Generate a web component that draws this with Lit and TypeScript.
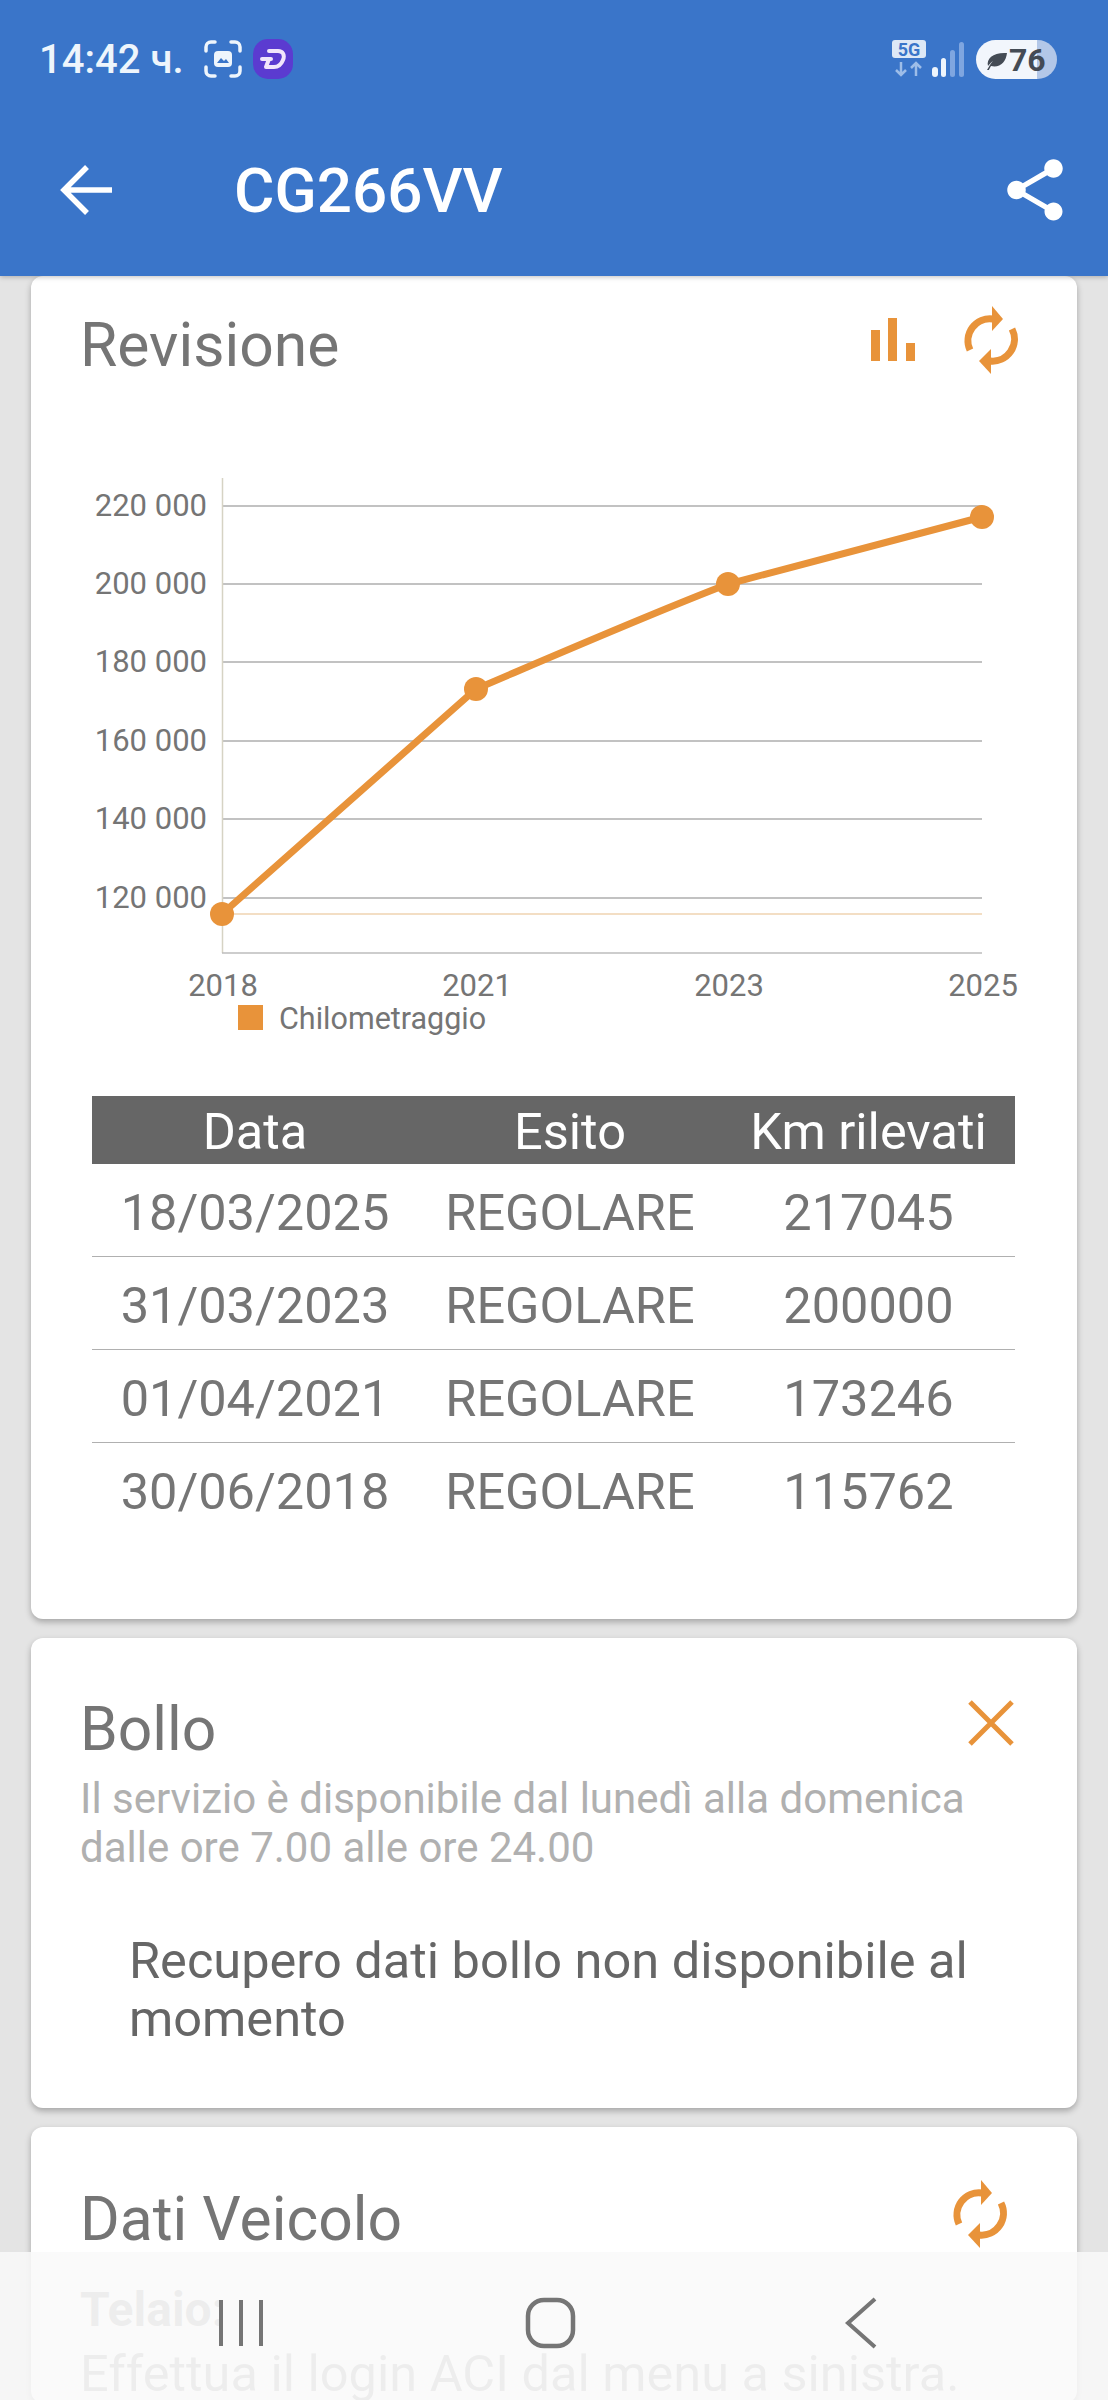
import { LitElement, html, svg, css } from 'lit';
import { customElement } from 'lit/decorators.js';

const ORANGE = '#e8933a';

const GRID = [
  { y: 506, label: '220 000' },
  { y: 584, label: '200 000' },
  { y: 662, label: '180 000' },
  { y: 741, label: '160 000' },
  { y: 819, label: '140 000' },
  { y: 898, label: '120 000' },
];

const POINTS = [
  { x: 222, y: 914, year: '2018' },
  { x: 476, y: 689, year: '2021' },
  { x: 728, y: 584, year: '2023' },
  { x: 982, y: 517, year: '2025' },
];

const ROWS = [
  ['18/03/2025', 'REGOLARE', '217045'],
  ['31/03/2023', 'REGOLARE', '200000'],
  ['01/04/2021', 'REGOLARE', '173246'],
  ['30/06/2018', 'REGOLARE', '115762'],
];

const refreshIcon = html`
  <svg class="icon" width="60" height="80" viewBox="0 0 60 80" fill="none">
    <path d="M9 50A22 22 0 0 1 32 19" stroke=${ORANGE} stroke-width="7" />
    <path d="M31 6V31L42 19Z" fill=${ORANGE} />
    <path d="M51 29A22 22 0 0 1 29 61" stroke=${ORANGE} stroke-width="7" />
    <path d="M30 49V74L18 61Z" fill=${ORANGE} />
  </svg>
`;

@customElement('app-root')
export class AppRoot extends LitElement {
  static styles = css`
    :host {
      background: #e4e4e4;
      color: #757575;
      display: block;
      font-family: Roboto, "Liberation Sans", sans-serif;
      height: 2400px;
      overflow: hidden;
      position: relative;
    }
    header {
      background: #3a75c9;
      box-shadow: 0 1px 5px rgba(0, 0, 0, 0.25);
      color: #fff;
      height: 276px;
      position: relative;
      z-index: 1;
    }
    .status {
      align-items: center;
      display: flex;
      height: 118px;
      padding: 0 51px 0 39px;
    }
    .time {
      color: #eef5fc;
      font-size: 40px;
      font-weight: 500;
      margin-right: 20px;
    }
    .status-right {
      align-items: center;
      display: flex;
      margin-left: auto;
    }
    .toolbar {
      align-items: center;
      display: flex;
      height: 144px;
      padding: 0 36px 0 60px;
    }
    .toolbar h1 {
      font-size: 62px;
      font-weight: 500;
      margin: 0 0 0 120px;
    }
    .toolbar .share { margin-left: auto; }
    main {
      display: flex;
      flex-direction: column;
      gap: 19px;
      padding: 0 31px;
    }
    .card {
      background: #fff;
      border-radius: 12px;
      box-shadow: 0 3px 6px rgba(0, 0, 0, 0.28);
      box-sizing: border-box;
    }
    .card-revisione { height: 1343px; padding-top: 35px; }
    .card-bollo { height: 470px; padding-top: 57px; }
    .card-dati { padding-top: 58px; }
    .card-head {
      align-items: center;
      display: flex;
      height: 70px;
      justify-content: space-between;
      padding: 0 56px 0 49px;
    }
    .card-head h2 {
      font-size: 60.6px;
      font-weight: 400;
      line-height: 70px;
      margin: 0;
    }
    .actions {
      align-items: center;
      display: flex;
      gap: 46px;
      margin-top: -12px;
    }
    .card-bollo .card-head { padding-right: 62px; }
    .card-dati .card-head { padding-right: 67px; }
    .icon { display: block; }
    .chart {
      display: block;
      margin-top: 79px;
    }
    table {
      border-collapse: collapse;
      font-size: 50.5px;
      margin: 56px 0 0 61px;
      table-layout: fixed;
      width: 923px;
    }
    th {
      background: #666;
      color: #fff;
      font-weight: 400;
      height: 66px;
      padding: 2px 0 0;
    }
    td {
      border-top: 1.5px solid #b0b0b0;
      height: 88px;
      padding: 4px 0 0;
      text-align: center;
    }
    tbody tr:first-child td { border-top: 0; }
    .col-date { width: 326px; }
    .col-esito { width: 304px; }
    .note {
      color: #b0b0b0;
      font-size: 42px;
      line-height: 49px;
      margin: 9px 0 0;
      padding: 0 49px;
    }
    .message {
      color: #666;
      font-size: 50.5px;
      line-height: 58px;
      margin: 60px 0 0;
      padding: 0 50px 0 98px;
    }
    .field-label {
      color: #aaa;
      font-size: 48px;
      font-weight: 700;
      margin: 26px 0 0;
      padding: 0 49px;
    }
    .field-value {
      color: #aaa;
      font-size: 50.5px;
      margin: 6px 0 0;
      padding: 0 49px;
      white-space: nowrap;
    }
    nav {
      align-items: center;
      background: rgba(249, 249, 249, 0.85);
      bottom: 0;
      display: flex;
      height: 148px;
      left: 0;
      position: absolute;
      right: 0;
    }
    nav svg {
      left: 0;
      position: absolute;
      top: 0;
    }
  `;

  private _chart() {
    return html`
      <svg class="chart" width="1046" height="580" viewBox="31 460 1046 580">
        <g font-size="31" fill="#757575">
          ${GRID.map(g => svg`
            <line x1="222" x2="982" y1=${g.y} y2=${g.y} stroke="#aeaeae" stroke-width="1.5" />
            <text x="207" y=${g.y + 10} text-anchor="end">${g.label}</text>
          `)}
          <line x1="222.5" x2="222.5" y1="478" y2="953" stroke="#d6d3c4" stroke-width="1.5" />
          <line x1="222" x2="982" y1="953" y2="953" stroke="#bdbdbd" stroke-width="1.5" />
          <line x1="222" x2="982" y1="914" y2="914" stroke="#efd3b0" stroke-width="1.5" />
          ${POINTS.map(p => svg`<text x=${p.x + 1} y="996" text-anchor="middle">${p.year}</text>`)}
          <rect x="238" y="1005" width="25" height="25" fill=${ORANGE} />
          <text x="279" y="1029" font-size="30.5">Chilometraggio</text>
        </g>
        <path
          d="M222 914L476 689C558 654 650 614 728 584L982 517"
          fill="none"
          stroke=${ORANGE}
          stroke-width="7"
        />
        ${POINTS.map(p => svg`<circle cx=${p.x} cy=${p.y} r="12" fill=${ORANGE} />`)}
      </svg>
    `;
  }

  render() {
    return html`
      <header>
        <div class="status">
          <span class="time">14:42 ч.</span>
          <svg class="icon" width="38" height="38" viewBox="0 0 38 38" fill="none">
            <path
              d="M2 11V7a5 5 0 0 1 5-5h4M27 2h4a5 5 0 0 1 5 5v4M36 27v4a5 5 0 0 1-5 5h-4M11 36H7a5 5 0 0 1-5-5v-4"
              stroke="#eef5fc"
              stroke-width="3.5"
              stroke-linecap="round"
            />
            <rect x="10" y="11" width="18" height="16" rx="4" fill="#eef5fc" />
            <path d="M13 23l4-5 3 3 2-2 3 4z" fill="#3a75c9" />
          </svg>
          <svg class="icon" style="margin-left:11px" width="40" height="40" viewBox="0 0 40 40" fill="none">
            <rect width="40" height="40" rx="15" fill="#5b3bd0" />
            <path
              d="M9 20H18M16 12H25C30 12 32 16 30 21C28 26 25 28 21 28H13L16 20"
              stroke="#f1e6fb"
              stroke-width="4"
              stroke-linejoin="round"
              stroke-linecap="round"
            />
          </svg>
          <div class="status-right">
            <svg class="icon" width="34" height="38" viewBox="0 0 34 38">
              <rect width="34" height="18" rx="3" fill="#dde8f6" />
              <text x="17" y="15.5" font-size="18" font-weight="700" fill="#3a75c9" text-anchor="middle">5G</text>
              <path d="M9 22V35M4 30l5 5 5-5M24 36V23M19 28l5-5 5 5" stroke="#9dbde8" stroke-width="2.5" fill="none" />
            </svg>
            <svg class="icon" style="margin-left:5px" width="34" height="36" viewBox="0 0 34 36">
              <rect x="1" y="26" width="6" height="10" rx="3" fill="#eef5fc" />
              <rect x="10" y="17" width="5" height="19" rx="2.5" fill="#eef5fc" />
              <rect x="19" y="9" width="5" height="27" rx="2.5" fill="#7fa6e0" />
              <rect x="28" y="1" width="5" height="35" rx="2.5" fill="#7fa6e0" />
            </svg>
            <svg class="icon" style="margin-left:11px" width="81" height="39" viewBox="0 0 81 39">
              <defs>
                <clipPath id="pill"><rect width="81" height="39" rx="19.5" /></clipPath>
              </defs>
              <g clip-path="url(#pill)">
                <rect width="61" height="39" fill="#f2f6fc" />
                <rect x="61" width="20" height="39" fill="#b3c7e8" />
              </g>
              <path d="M11 30C13 27 14 24 17 21C14 23 13 25 12 26C10 18 18 12 31 13C30 22 24 28 15 26C14 28 13 29 13 30Z" fill="#444b55" />
              <text x="33" y="31" font-size="32" font-weight="700" fill="#444b55">76</text>
            </svg>
          </div>
        </div>
        <div class="toolbar">
          <svg class="icon" width="54" height="52" viewBox="0 0 54 52" fill="none">
            <path d="M52 26H5M27 3L4 26L27 49" stroke="#fff" stroke-width="5.5" />
          </svg>
          <h1>CG266VV</h1>
          <svg class="icon share" width="74" height="74" viewBox="0 0 24 24" fill="#fff">
            <path d="M18 16.08c-.76 0-1.44.3-1.96.77L8.91 12.7c.05-.23.09-.46.09-.7s-.04-.47-.09-.7l7.05-4.11c.54.5 1.25.81 2.04.81 1.66 0 3-1.34 3-3s-1.34-3-3-3-3 1.34-3 3c0 .24.04.47.09.7L8.04 9.81C7.5 9.31 6.79 9 6 9c-1.66 0-3 1.34-3 3s1.34 3 3 3c.79 0 1.5-.31 2.04-.81l7.12 4.16c-.05.21-.08.43-.08.65 0 1.61 1.31 2.92 2.92 2.92 1.61 0 2.92-1.31 2.92-2.92s-1.31-2.92-2.92-2.92z" />
          </svg>
        </div>
      </header>

      <main>
        <section class="card card-revisione">
          <div class="card-head">
            <h2>Revisione</h2>
            <div class="actions">
              <svg class="icon" width="44" height="44" viewBox="0 0 44 44" fill=${ORANGE}>
                <rect x="0" y="12" width="9" height="31" />
                <rect x="17" y="0" width="9" height="43" />
                <rect x="35" y="25" width="9" height="18" />
              </svg>
              ${refreshIcon}
            </div>
          </div>
          ${this._chart()}
          <table>
            <thead>
              <tr>
                <th class="col-date">Data</th>
                <th class="col-esito">Esito</th>
                <th>Km rilevati</th>
              </tr>
            </thead>
            <tbody>
              ${ROWS.map(r => html`<tr>${r.map(c => html`<td>${c}</td>`)}</tr>`)}
            </tbody>
          </table>
        </section>

        <section class="card card-bollo">
          <div class="card-head">
            <h2>Bollo</h2>
            <svg class="icon" width="48" height="48" viewBox="0 0 48 48" fill="none" style="margin-top:-14px">
              <path d="M3 3L45 45M45 3L3 45" stroke=${ORANGE} stroke-width="5" />
            </svg>
          </div>
          <p class="note">Il servizio è disponibile dal lunedì alla domenica<br />dalle ore 7.00 alle ore 24.00</p>
          <p class="message">Recupero dati bollo non disponibile al momento</p>
        </section>

        <section class="card card-dati">
          <div class="card-head">
            <h2>Dati Veicolo</h2>
            <div class="actions">${refreshIcon}</div>
          </div>
          <p class="field-label">Telaio:</p>
          <p class="field-value">Effettua il login ACI dal menu a sinistra.</p>
        </section>
      </main>

      <nav>
        <svg width="1108" height="148" viewBox="0 2252 1108 148" fill="none">
          <path d="M221 2300V2346M241 2300V2346M261 2300V2346" stroke="#757575" stroke-width="4" />
          <rect x="528" y="2300" width="45" height="46" rx="16" stroke="#757575" stroke-width="4.5" />
          <path d="M875 2299L848 2323L875 2347" stroke="#757575" stroke-width="4" />
        </svg>
      </nav>
    `;
  }
}
